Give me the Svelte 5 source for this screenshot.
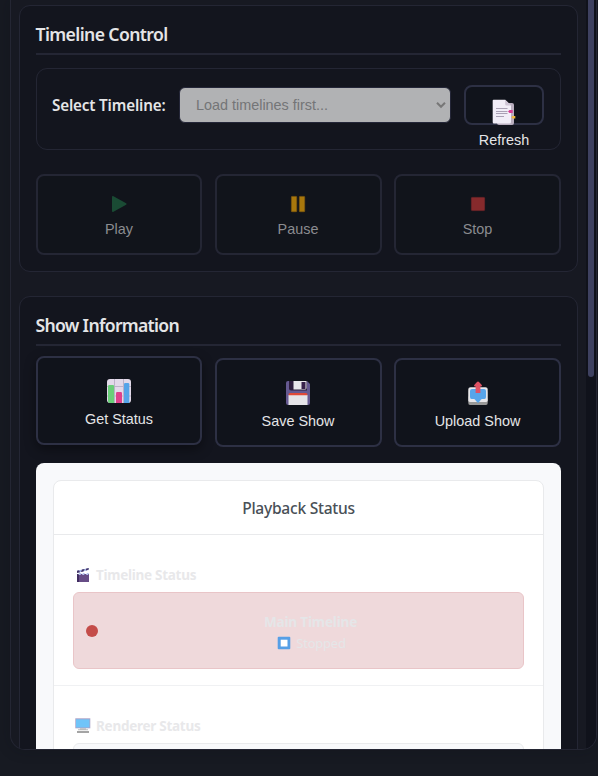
<script>
  const transport = [
    { id: 'play', label: 'Play' },
    { id: 'pause', label: 'Pause' },
    { id: 'stop', label: 'Stop' }
  ];
  const actions = [
    { id: 'status', label: 'Get Status' },
    { id: 'save', label: 'Save Show' },
    { id: 'upload', label: 'Upload Show' }
  ];
</script>

{#snippet icon(id)}
  {#if id === 'play'}
    <svg width="24" height="24" viewBox="0 0 24 24"><path d="M5 5.2 Q5 3.4 6.5 4.2 L19.1 11.3 Q20.1 12 19.1 12.7 L6.5 19.8 Q5 20.6 5 18.8Z" fill="#1a4b34" /></svg>
  {:else if id === 'pause'}
    <svg width="24" height="24" viewBox="0 0 24 24"><g fill="#a8770c" stroke="#80590e" stroke-width=".7"><rect x="5.4" y="4.4" width="5.3" height="15.3" rx=".5" /><rect x="13.4" y="4.4" width="5.3" height="15.3" rx=".5" /></g></svg>
  {:else if id === 'stop'}
    <svg width="24" height="24" viewBox="0 0 24 24"><rect x="5.4" y="5.4" width="13.2" height="13.2" rx=".8" fill="#862a2c" stroke="#702528" stroke-width=".8" /></svg>
  {:else if id === 'status'}
    <svg width="24" height="24" viewBox="0 0 24 24"><rect width="24" height="24" rx="3" fill="#e2d9e9" /><path d="M7.5 0v24M16.5 0v24M0 7.5h24M0 17h24" stroke="#bdb2c9" stroke-width="1" /><path d="M1 7.2Q1 6 2.2 6H6Q7.1 6 7.1 7.2V24H2.5Q1 24 1 22Z" fill="#69ce78" /><path d="M9 14.2Q9 13 10.2 13H13.8Q15 13 15 14.2V24H9Z" fill="#df408b" /><path d="M17 5.2Q17 4 18.2 4H21Q22.3 4 22.3 5.2V24H17Z" fill="#55a4e9" /></svg>
  {:else if id === 'save'}
    <svg width="26" height="26" viewBox="0 0 26 26"><path d="M3 1H22L25 4V23Q25 25 23 25H3Q1 25 1 23V3Q1 1 3 1Z" fill="#655991" /><path d="M4 1H22V10.5H6Q4 10.5 4 8.5Z" fill="#2d1d3d" /><path d="M8.5 1H21.5V8Q21.5 9.5 20 9.5H8.5Z" fill="#e9e7ec" /><rect x="16.5" y="2" width="4" height="7" fill="#38224b" /><path d="M3.5 15H22.5V25H3.5Z" fill="#e5e4e8" /><path d="M3.5 15.2Q3.5 13 5 13H21Q22.5 13 22.5 15.2Z" fill="#df4938" /></svg>
  {:else if id === 'upload'}
    <svg width="24" height="26" viewBox="0 0 24 26"><path d="M2.3 20H21.7V23Q21.7 25 20 25H4Q2.3 25 2.3 23Z" fill="#999" /><path d="M4.5 7.3H19.5Q21.5 7.3 21.7 9L21.8 20Q21.8 22 20 22H4Q2.2 22 2.2 20L2.3 9Q2.5 7.3 4.5 7.3Z" fill="#e8e7ea" /><path d="M6 9H18Q20 9 20 11V17Q20 19 18.5 19H16Q15 19 14 21L12 23L10 21Q9 19 8 19H5.5Q4 19 4 17V11Q4 9 6 9Z" fill="#57a5eb" /><path d="M12 1.4Q13 1.4 16 5.2Q16 6.5 15 6.5H14.4V13H9.6V6.5H9Q8 6.5 8 5.2Q11 1.4 12 1.4Z" fill="#df5264" /></svg>
  {/if}
{/snippet}

<div class="page">
  <main class="frame">
    <div class="content">
      <section class="card timeline">
        <h2>Timeline Control</h2>
        <div class="selector">
          <span class="label">Select Timeline:</span>
          <div class="select"><span>Load timelines first...</span>
            <svg width="12" height="8" viewBox="0 0 12 8"><path d="M2 1.7 6 5.8 10 1.7" fill="none" stroke="#777" stroke-width="2" /></svg>
          </div>
          <button class="refresh">
            <svg width="24" height="27" viewBox="0 0 24 27"><path d="M5 4H20Q22 4 22 6V24Q22 26 20 26H7Q5 26 5 24Z" fill="#b9aebe" /><path d="M1.5 .7H13.2L19 6.5V23Q19 24.5 17.5 24.5H2Q.7 24.5 .7 23V1.7Q.7 .7 1.5 .7Z" fill="#f1edf7" /><path d="M13.2 .7 19 6.5H14.5Q13.2 6.5 13.2 5.2Z" fill="#cec4d5" /><path d="M4 9.5H15.5M4 12.5H15.5M4 14.5H15.5M4 17.5H12" stroke="#aaa1b5" /><path d="M17.5 11H20.7V14H17.5L16 12.5Z" fill="#d83c91" /><path d="M20.5 17H23.3V19.5H20.5L19.3 18.2Z" fill="#f1bb3e" /></svg>
            <span>Refresh</span>
          </button>
        </div>
        <div class="buttons transport">
          {#each transport as item}
            <button disabled>{@render icon(item.id)}<span>{item.label}</span></button>
          {/each}
        </div>
      </section>

      <section class="card info">
        <h2 class="wide">Show Information</h2>
        <div class="buttons actions">
          {#each actions as item}
            <button class:raised={item.id === 'status'}>{@render icon(item.id)}<span>{item.label}</span></button>
          {/each}
        </div>
        <div class="panel">
          <div class="report">
            <h3>Playback Status</h3>
            <div class="group">
              <h4><svg width="18" height="18" viewBox="0 0 18 18"><path d="M3 8H15V16H3Z" fill="#674d86" /><path d="M3 8H5V16H3Z" fill="#402c60" /><path d="M3 4.8 14.7 2V4L3 7Z" fill="#a4b3e3" /><path d="M3 4.8 5 4.3 6 6.2 3 7ZM8 3.6 10.6 3 9.4 5.4 7 6ZM12 2.7 14.7 2V3.6L12 4.6Z" fill="#453568" /><path d="M5 7H7.5L6.5 9H4.5ZM9 7H11L10 9H8ZM13 7H15L14 9H12Z" fill="#b7c5ef" /></svg><span>Timeline Status</span></h4>
              <div class="state">
                <i></i>
                <div><b>Main Timeline</b><p><svg width="14" height="14" viewBox="0 0 14 14"><rect x=".7" y=".7" width="12.6" height="12.6" rx="1" fill="#569fe6" /><rect x="3.7" y="3.7" width="6.8" height="6.8" fill="#fff" /></svg><span>Stopped</span></p></div>
              </div>
            </div>
            <div class="group renderer">
              <h4><svg width="18" height="18" viewBox="0 0 18 18"><rect x="1.3" y="1.3" width="15" height="10" fill="#aaa1c6" /><rect x="2" y="2.3" width="13.5" height="8.2" fill="#70c4f8" /><path d="M6 11.3H12V12.3H14V13.3H4V12.3H6Z" fill="#bdbdbd" /><path d="M3 14H15V16H3Z" fill="#a4a4a4" /></svg><span>Renderer Status</span></h4>
              <div class="empty"></div>
            </div>
          </div>
        </div>
      </section>
    </div>
    <div class="scrollbar"><div class="thumb"></div></div>
  </main>
</div>

<style>
  :global(body) { background: #171922; }
  * { box-sizing: border-box; }
  .page { height: 776px; overflow: hidden; padding: 0 1px 26px 10px; background: #171a22; font-family: "Noto Sans", sans-serif; color: #e5e5e7; }
  .frame { height: 750px; border: 1px solid #242633; border-top: 0; border-radius: 0 0 15px 15px; display: flex; overflow: hidden; background: #171922; box-shadow: 0 0 14px #0d0f1744; }
  .content { flex: 1; padding: 5px 8px 0; min-width: 0; }
  .card { background: #13151e; border: 1px solid #242634; border-radius: 11px; padding: 0 16px; }
  .timeline { height: 267px; margin-bottom: 24px; }
  .info { height: 700px; }
  h2, h3, h4, p { margin: 0; }
  h2 { height: 49px; padding-top: 16px; border-bottom: 2px solid #242634; font-size: 17.6px; line-height: 25px; font-weight: 600; letter-spacing: -.6px; white-space: nowrap; text-indent: -.5px; }
  .wide { letter-spacing: -.7px; }
  .selector { height: 82px; margin-top: 13px; border: 1px solid #242634; border-radius: 11px; padding: 16px 16px 16px 15px; display: flex; align-items: flex-start; }
  .label { width: 127px; line-height: 40px; font-size: 15.2px; font-weight: 600; letter-spacing: -.15px; white-space: nowrap; }
  .select { width: 272px; height: 36px; margin: 2px 13px 0 0; border: 1px solid #242638; border-radius: 6px; background: #b1b2b4; color: #747577; padding: 0 3px 0 16px; display: flex; justify-content: space-between; align-items: center; font: 14.4px "Liberation Sans", sans-serif; }
  button { font: 14.4px "Liberation Sans", sans-serif; color: #e5e5e7; border: 2px solid #2d3044; border-radius: 8px; background: #10131b; padding: 0; display: flex; flex-direction: column; align-items: center; }
  button span { line-height: 17px; white-space: nowrap; }
  svg { display: block; flex: none; }
  .refresh { width: 80px; height: 40px; flex: none; padding-top: 12px; }
  .refresh span { margin-top: 6px; }
  .buttons { display: grid; grid-template-columns: 166px 167px 167px; column-gap: 12.5px; }
  .transport { margin-top: 24px; }
  .transport button { height: 81px; padding-top: 16px; border-color: #242634; color: #8b8c90; background: #11141b; }
  .transport span { margin-top: 5px; }
  .actions { padding-top: 12px; }
  .actions button { height: 89px; padding-top: 20px; }
  .actions span { margin-top: 7px; }
  .actions .raised { position: relative; top: -2px; padding-top: 21px; box-shadow: 0 4px 12px #0006; }
  .actions .raised span { margin-top: 8px; }
  .panel { margin-top: 16px; height: 600px; background: #f8f9fb; border-radius: 8px; padding: 17px; }
  .report { height: 600px; background: #fff; border: 1px solid #e9eaec; border-radius: 8px; }
  h3 { height: 54px; line-height: 55px; text-align: center; border-bottom: 1px solid #e9eaec; color: #495057; font-size: 15.6px; font-weight: 500; letter-spacing: -.27px; }
  .group { height: 151px; padding: 30px 19px 0; border-bottom: 1px solid #f0f1f3; }
  h4 { display: flex; align-items: center; height: 20px; padding-left: 1px; gap: 4px; font-size: 13.5px; font-weight: 700; letter-spacing: -.27px; color: #e8e8ea; }
  .state { margin-top: 7px; height: 77px; border: 1px solid #e9c5c8; border-radius: 6px; background: #efd9db; padding: 0 12px; display: flex; align-items: center; color: #e5e6e8; }
  .state i { width: 12px; height: 12px; border-radius: 50%; background: #c44c49; }
  .state > div { flex: 1; text-align: center; font-size: 13.6px; padding: 3px 0 0 12px; }
  .state b { display: block; line-height: 22px; letter-spacing: -.2px; }
  .state p { display: flex; justify-content: center; align-items: center; gap: 5px; line-height: 21px; font-size: 13px; padding-left: 2px; letter-spacing: -.25px; }
  .empty { height: 60px; margin-top: 7px; border: 1px solid #e9eaec; border-radius: 6px; background: #f8f9fb; }
  .scrollbar { width: 10px; background: #10121b; padding: 0 2px; }
  .thumb { height: 377px; background: #3e4160; border-radius: 0 0 3px 3px; }
</style>
